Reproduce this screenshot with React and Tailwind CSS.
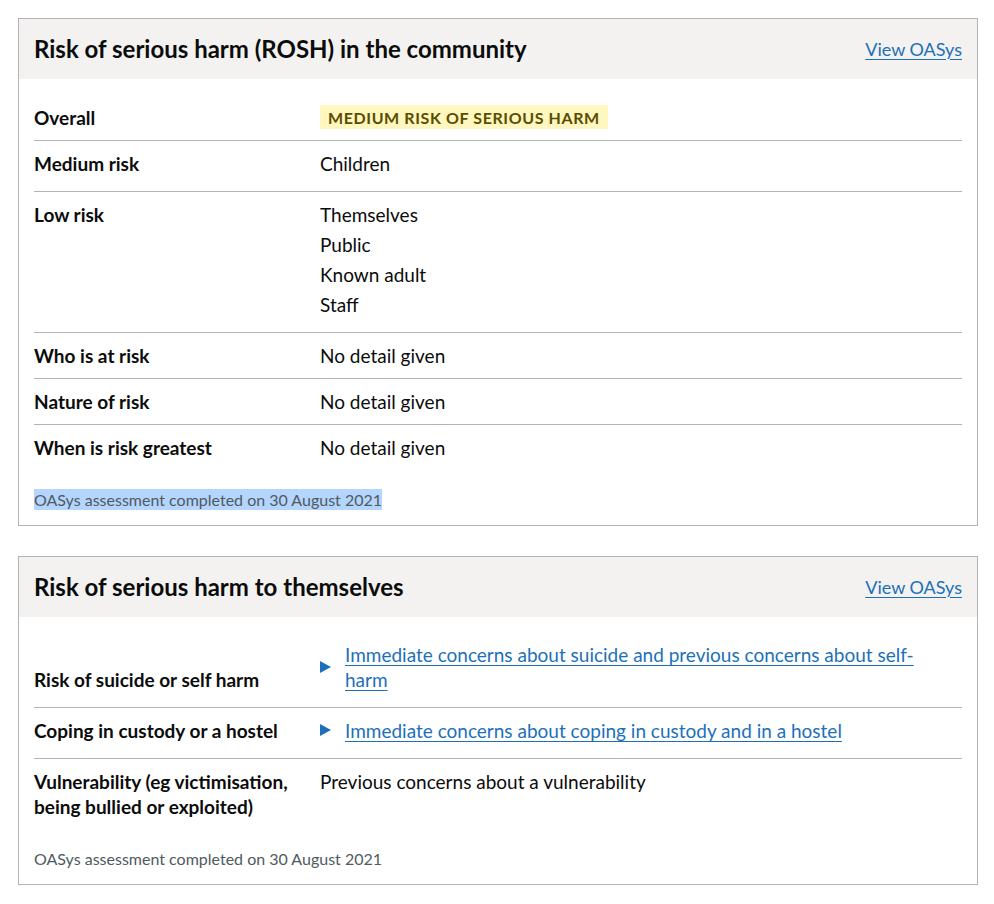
import React from "react";

const font = { fontFamily: "Lato, 'Liberation Sans', sans-serif" };

function Row({ label, children, last, keyClass = "" }) {
  return (
    <div className={`flex ${last ? "" : "border-b border-[#b1b4b6]"}`}>
      <div className={`w-[286px] shrink-0 pr-5 pt-[10px] pb-[10px] text-[19px] leading-[25px] font-bold ${keyClass}`}>
        {label}
      </div>
      <div className="flex-1 pt-[10px] pb-[10px] text-[19px] leading-[25px]">{children}</div>
    </div>
  );
}

function Card({ title, highlight, children }) {
  return (
    <section className="border border-[#b1b4b6] bg-white">
      <div className="bg-[#f3f2f1] px-[15px] py-[15px] flex items-center justify-between">
        <h2 className="text-[24px] leading-[30px] font-bold">{title}</h2>
        <a href="#" className="text-[18px] leading-[25px] text-[#1d70b8] underline underline-offset-[3px] decoration-1">
          View OASys
        </a>
      </div>
      <div className="px-[15px] pt-[15px] pb-[15px]">
        {children}
        <p className="mt-[20px] text-[16px] leading-[20px] text-[#505a5f]">
          <span className={highlight ? "bg-[#b4d5fe] py-[1px]" : ""}>
            OASys assessment completed on 30 August 2021
          </span>
        </p>
      </div>
    </section>
  );
}

function Disclosure({ children }) {
  return (
    <div className="relative max-w-[600px] pl-[25px] pb-[5px]">
      <span className="absolute left-0 top-1/2 -translate-y-[calc(50%+3px)] w-0 h-0 border-y-[6px] border-y-transparent border-l-[11px] border-l-[#1d70b8]" />
      <a href="#" className="text-[#1d70b8] underline underline-offset-[3px] decoration-1">
        {children}
      </a>
    </div>
  );
}

export default function App() {
  return (
    <div style={font} className="bg-white text-[#0b0c0c] pl-[18px] pr-[16px] pt-[18px] pb-[19px] flex flex-col gap-[30px]">
      <Card title="Risk of serious harm (ROSH) in the community" highlight>
        <Row label="Overall" keyClass="pt-[11px]">
          <span className="inline-block bg-[#fff7bf] text-[#594d00] font-bold uppercase text-[16px] leading-[15px] tracking-[0.6px] px-2 pt-[5px] pb-1">
            Medium risk of serious harm
          </span>
        </Row>
        <Row label="Medium risk">
          <ul>
            <li className="mb-[5px]">Children</li>
          </ul>
        </Row>
        <Row label="Low risk">
          <ul>
            <li className="mb-[5px]">Themselves</li>
            <li className="mb-[5px]">Public</li>
            <li className="mb-[5px]">Known adult</li>
            <li className="mb-[5px]">Staff</li>
          </ul>
        </Row>
        <Row label="Who is at risk">No detail given</Row>
        <Row label="Nature of risk">No detail given</Row>
        <Row label="When is risk greatest" last>No detail given</Row>
      </Card>

      <Card title="Risk of serious harm to themselves">
        <Row label="Risk of suicide or self harm" keyClass="pt-[35px]">
          <Disclosure>
            Immediate concerns about suicide and previous concerns about self-harm
          </Disclosure>
        </Row>
        <Row label="Coping in custody or a hostel">
          <Disclosure>Immediate concerns about coping in custody and in a hostel</Disclosure>
        </Row>
        <Row label="Vulnerability (eg victimisation, being bullied or exploited)" last>
          Previous concerns about a vulnerability
        </Row>
      </Card>
    </div>
  );
}
